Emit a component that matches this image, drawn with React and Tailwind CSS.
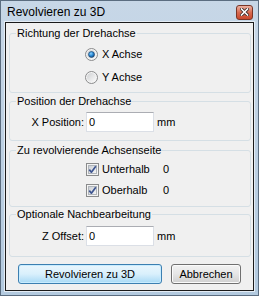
import React from 'react'

const font = { fontFamily: '"Liberation Sans", Arial, sans-serif' }

const Radio = ({ checked, id }) => (
  <svg width="13" height="13" viewBox="0 0 13 13" className="shrink-0">
    <defs>
      <linearGradient id={`rf-${id}`} x1="0" y1="0" x2="1" y2="1">
        <stop offset="0" stopColor="#cfd1d3" />
        <stop offset="1" stopColor="#fbfbfb" />
      </linearGradient>
      <radialGradient id={`rd-${id}`} cx="0.4" cy="0.35" r="0.7">
        <stop offset="0" stopColor="#8fd3ff" />
        <stop offset="0.5" stopColor="#2c8bd6" />
        <stop offset="1" stopColor="#12447a" />
      </radialGradient>
    </defs>
    <circle cx="6.5" cy="6.5" r="6" fill="#f4f4f4" stroke="#8a8b8c" />
    <circle cx="6.5" cy="6.5" r="4.5" fill={`url(#rf-${id})`} />
    {checked && <circle cx="6.5" cy="6.5" r="3" fill={`url(#rd-${id})`} stroke="#1b3f66" strokeWidth="0.6" />}
  </svg>
)

const Check = ({ id }) => (
  <svg width="13" height="13" viewBox="0 0 13 13" className="shrink-0">
    <defs>
      <linearGradient id={`cf-${id}`} x1="0" y1="0" x2="1" y2="1">
        <stop offset="0" stopColor="#c9cdd3" />
        <stop offset="1" stopColor="#f7f7f7" />
      </linearGradient>
    </defs>
    <rect x="0.5" y="0.5" width="12" height="12" fill="#f4f4f4" stroke="#8a8b8c" />
    <rect x="2.5" y="2.5" width="8" height="8" fill={`url(#cf-${id})`} stroke="#b0b5bb" />
    <path d="M3.3 6.6 L5.4 9.2 L9.8 3.2" fill="none" stroke="#3d5490" strokeWidth="1.7" strokeLinejoin="round" />
  </svg>
)

const Group = ({ title, className = '', children }) => (
  <fieldset className={`ml-[3px] w-[242px] rounded-[3px] border border-[#d5dfe5] ${className}`}>
    <legend className="ml-[6px] px-[1px] text-[11px] leading-[14px] text-black">{title}</legend>
    {children}
  </fieldset>
)

const TextBox = () => (
  <div className="flex h-[20px] w-[68px] items-center border border-[#dbdfe6] border-t-[#abadb3] bg-white pl-[2px] text-[11px]">
    0
  </div>
)

export default function App() {
  return (
    <div style={font} className="flex h-[296px] w-[259px] flex-col border border-[#5b6d80] bg-gradient-to-b from-[#c7d7e7] to-[#b3cadf] px-[4px] pb-[4px]">
      {/* Title bar */}
      <div className="flex h-[21px] items-center justify-between pl-[2px] pr-[1px] pt-[1px]">
        <span className="text-[12px] text-black">Revolvieren zu 3D</span>
        <div className="flex h-[15px] w-[17px] items-center justify-center rounded-[3px] border border-[#7a3526] bg-gradient-to-b from-[#eab1a2] via-[#d8694f] to-[#c9482c]">
          <svg width="9" height="8" viewBox="0 0 9 8">
            <path d="M1.5 1 L7.5 7 M7.5 1 L1.5 7" stroke="#3b2b28" strokeWidth="3.2" strokeLinecap="square" />
            <path d="M1.5 1 L7.5 7 M7.5 1 L1.5 7" stroke="#ffffff" strokeWidth="1.6" strokeLinecap="square" />
          </svg>
        </div>
      </div>

      {/* Client area */}
      <div className="flex flex-1 flex-col border border-[#1a1a1a] bg-[#f0f0f0] pt-[3px] text-[11px] text-black shadow-[0_0_0_1px_#e4ecf4]">
        <Group title="Richtung der Drehachse" className="pb-[5px]">
          <div className="flex flex-col gap-[3px] pl-[75px] pt-[4px]">
            <div className="flex h-[20px] items-center gap-[4px]">
              <Radio checked id="x" />
              <span>X Achse</span>
            </div>
            <div className="flex h-[20px] items-center gap-[4px]">
              <Radio id="y" />
              <span>Y Achse</span>
            </div>
          </div>
        </Group>

        <Group title="Position der Drehachse" className="mt-[1px] pb-[8px]">
          <div className="flex items-center pt-[4px]">
            <span className="w-[76px] pr-[2px] text-right">X Position:</span>
            <TextBox />
            <span className="ml-[3px]">mm</span>
          </div>
        </Group>

        <Group title="Zu revolvierende Achsenseite" className="mt-[2px] pb-[6px]">
          <div className="flex flex-col gap-[1px] pl-[76px] pt-[2px]">
            <div className="flex h-[20px] items-center gap-[3px]">
              <Check id="u" />
              <span className="w-[58px]">Unterhalb</span>
              <span>0</span>
            </div>
            <div className="flex h-[20px] items-center gap-[3px]">
              <Check id="o" />
              <span className="w-[58px]">Oberhalb</span>
              <span>0</span>
            </div>
          </div>
        </Group>

        <Group title="Optionale Nachbearbeitung" className="pb-[10px]">
          <div className="flex items-center pt-[5px]">
            <span className="w-[76px] pr-[2px] text-right">Z Offset:</span>
            <TextBox />
            <span className="ml-[3px]">mm</span>
          </div>
        </Group>

        <div className="ml-[12px] mt-[7px] flex gap-[9px]">
          <button className="h-[20px] w-[144px] rounded-[3px] border border-[#3c7fb1] bg-gradient-to-b from-[#eaf6fd] via-[#d9f0fc] to-[#a7d9f5] text-[11px] text-black shadow-[inset_0_0_0_1px_#c8ecff]">
            Revolvieren zu 3D
          </button>
          <button className="h-[20px] w-[70px] rounded-[3px] border border-[#707070] bg-gradient-to-b from-[#f2f2f2] via-[#e6e6e6] to-[#cfcfcf] text-[11px] text-black shadow-[inset_0_0_0_1px_#fbfbfb]">
            Abbrechen
          </button>
        </div>
      </div>
    </div>
  )
}
